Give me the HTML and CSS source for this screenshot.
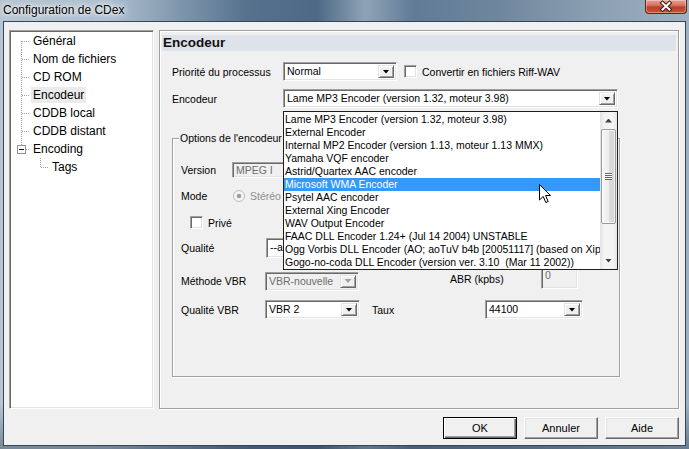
FILE: index.html
```html
<!DOCTYPE html>
<html lang="fr">
<head>
<meta charset="utf-8">
<title>Configuration de CDex</title>
<link rel="stylesheet" href="styles.css">
</head>
<body>
<div class="window">
  <div class="titlebar">
    <span class="title">Configuration de CDex</span>
    <span class="close" aria-label="Fermer">
      <svg width="40" height="13" viewBox="0 0 40 13">
        <path d="M16.5 3 L23.5 9.5 M23.5 3 L16.5 9.5" stroke="#3d1810" stroke-width="4" stroke-linecap="square" fill="none"/>
        <path d="M16.5 3 L23.5 9.5 M23.5 3 L16.5 9.5" stroke="#ffffff" stroke-width="2" stroke-linecap="square" fill="none"/>
      </svg>
    </span>
  </div>
  <div class="client">
    <div class="main">
      <div class="tree">
        <div class="node"><span class="gutter g-first"></span><span class="label">Général</span></div>
        <div class="node"><span class="gutter g-mid"></span><span class="label">Nom de fichiers</span></div>
        <div class="node"><span class="gutter g-mid"></span><span class="label">CD ROM</span></div>
        <div class="node"><span class="gutter g-mid"></span><span class="label selected">Encodeur</span></div>
        <div class="node"><span class="gutter g-mid"></span><span class="label">CDDB local</span></div>
        <div class="node"><span class="gutter g-mid"></span><span class="label">CDDB distant</span></div>
        <div class="node"><span class="gutter g-last"><span class="expander"></span></span><span class="label">Encoding</span></div>
        <div class="node"><span class="gutter"></span><span class="gutter g-last"></span><span class="label">Tags</span></div>
      </div>
      <div class="page">
        <div class="page-header">Encodeur</div>
        <div class="frow row-prio">
          <span class="lbl-main">Priorité du processus</span>
          <div class="combo sunken w-prio"><span class="combo-text">Normal</span><span class="combo-btn"><i class="tri"></i></span></div>
          <span class="check sunken"></span><span class="check-text">Convertir en fichiers Riff-WAV</span>
        </div>
        <div class="frow row-enc">
          <span class="lbl-main">Encodeur</span>
          <div class="combo sunken w-enc">
            <span class="combo-text">Lame MP3 Encoder (version 1.32, moteur 3.98)</span><span class="combo-btn"><i class="tri"></i></span>
            <div class="dropdown">
              <div class="items">
                <div class="item">Lame MP3 Encoder (version 1.32, moteur 3.98)</div>
                <div class="item">External Encoder</div>
                <div class="item">Internal MP2 Encoder (version 1.13, moteur 1.13 MMX)</div>
                <div class="item">Yamaha VQF encoder</div>
                <div class="item">Astrid/Quartex AAC encoder</div>
                <div class="item active">Microsoft WMA Encoder</div>
                <div class="item">Psytel AAC encoder</div>
                <div class="item">External Xing Encoder</div>
                <div class="item">WAV Output Encoder</div>
                <div class="item">FAAC DLL Encoder 1.24+ (Jul 14 2004) UNSTABLE</div>
                <div class="item">Ogg Vorbis DLL Encoder (AO; aoTuV b4b [20051117] (based on Xiph.Org's libVorbis))</div>
                <div class="item">Gogo-no-coda DLL Encoder (version ver. 3.10  (Mar 11 2002))</div>
              </div>
              <div class="sb">
                <div class="sb-btn"><i class="arr up"></i></div>
                <div class="thumb"><i class="grip"></i></div>
                <div class="sb-track"></div>
                <div class="sb-btn"><i class="arr"></i></div>
              </div>
              <svg class="cursor" width="13" height="20" viewBox="0 0 13 20">
                <path d="M0.5 0.5 L0.5 16 L4.2 12.4 L6.8 18.5 L9.2 17.5 L6.6 11.5 L11.5 11.5 Z" fill="#fff" stroke="#000" stroke-width="1" stroke-linejoin="miter"/>
              </svg>
            </div>
          </div>
        </div>
        <div class="group">
          <span class="legend">Options de l'encodeur</span>
          <div class="grow r-version">
            <span class="gl w51">Version</span>
            <div class="edit sunken disabled w-version">MPEG I</div>
          </div>
          <div class="grow r-mode">
            <span class="gl w52">Mode</span>
            <span class="radio"></span><span class="dis-text">Stéréo</span>
          </div>
          <div class="grow r-prive">
            <span class="check sunken"></span><span class="check-text">Privé</span>
          </div>
          <div class="grow r-qual">
            <span class="gl w85">Qualité</span>
            <div class="combo sunken w-qual"><span class="combo-text">--alt-preset standard</span><span class="combo-btn"><i class="tri"></i></span></div>
          </div>
          <div class="grow r-meth">
            <span class="gl w84">Méthode VBR</span>
            <div class="combo sunken disabled w-meth"><span class="combo-text">VBR-nouvelle</span><span class="combo-btn"><i class="tri"></i></span></div>
            <div class="abr">
              <span class="abr-lbl">ABR (kpbs)</span>
              <div class="edit sunken disabled w-abr">0</div>
            </div>
          </div>
          <div class="grow r-qvbr">
            <span class="gl w84">Qualité VBR</span>
            <div class="combo sunken w-vbr"><span class="combo-text">VBR 2</span><span class="combo-btn"><i class="tri"></i></span></div>
            <span class="taux">Taux</span>
            <div class="combo sunken w-taux"><span class="combo-text">44100</span><span class="combo-btn"><i class="tri"></i></span></div>
          </div>
        </div>
      </div>
    </div>
    <div class="buttons">
      <button class="btn default">OK</button>
      <button class="btn">Annuler</button>
      <button class="btn">Aide</button>
    </div>
  </div>
</div>
</body>
</html>
```

FILE: styles.css
```css
* { box-sizing: border-box; }
html, body { margin: 0; padding: 0; }
body {
  width: 689px;
  height: 449px;
  overflow: hidden;
  font-family: "Liberation Sans", Arial, sans-serif;
  font-size: 10.5px;
  color: #000;
  background: #6f8599;
}
.window {
  width: 689px;
  height: 449px;
  display: flex;
  flex-direction: column;
  background:
    linear-gradient(to bottom, rgba(40,60,80,0) 0, rgba(40,60,80,0) 90%, rgba(40,60,80,.45) 100%),
    linear-gradient(to right,
      #b7c5d2 0, #aebfce 16%, #7f97ad 26%, #56718d 36%, #4d6985 46%,
      #8ea3b6 53%, #617b96 60%, #6e869d 72%, #8a9fb2 86%, #a0b1c1 100%);
}
.titlebar {
  height: 21px;
  flex: none;
  display: flex;
  justify-content: space-between;
  align-items: flex-start;
}
.title {
  font-size: 12px;
  line-height: 20px;
  padding-left: 3px;
  color: #000;
  text-shadow: 0 0 6px #fff, 0 0 3px rgba(255,255,255,.9), 0 0 10px rgba(255,255,255,.7);
}
.close {
  width: 42px;
  height: 14px;
  margin-right: 2px;
  display: flex;
  align-items: center;
  justify-content: center;
  border: 1px solid #5e2418;
  border-top: none;
  border-radius: 0 0 4px 4px;
  background: linear-gradient(#e3a093 0, #d57563 40%, #bc3f27 55%, #c9553a 100%);
  box-shadow: inset 0 0 0 1px rgba(255,255,255,.35);
}
.client {
  flex: 1;
  margin: 0 3px 3px 3px;
  border: 1px solid #34475a;
  background: #f0f0f0;
  display: flex;
  flex-direction: column;
  padding: 8px 6px 6px 5px;
}
.main {
  display: flex;
  gap: 5px;
  height: 379px;
}

/* tree */
.tree {
  width: 145px;
  height: 379px;
  flex: none;
  background: #fff;
  border: 1px solid;
  border-color: #a0a0a0 #ffffff #ffffff #a0a0a0;
  box-shadow: inset 1px 1px 0 #696969, inset -1px -1px 0 #e3e3e3;
  padding: 1px 0 0 1px;
  font-size: 12px;
}
.node {
  display: flex;
  align-items: center;
  height: 18px;
}
.gutter {
  width: 19px;
  height: 18px;
  flex: none;
  display: flex;
  align-items: center;
  background-repeat: no-repeat;
}
.g-first, .g-mid, .g-last {
  background-image:
    repeating-linear-gradient(to bottom, #a0a0a0 0 1px, transparent 1px 2px),
    repeating-linear-gradient(to right, #a0a0a0 0 1px, transparent 1px 2px);
  background-position: 10px 0, 11px 9px;
  background-size: 1px 18px, 8px 1px;
}
.g-first { background-position: 10px 9px, 11px 9px; background-size: 1px 9px, 8px 1px; }
.g-last { background-position: 10px 0, 11px 9px; background-size: 1px 9px, 8px 1px; }
.expander {
  width: 9px;
  height: 9px;
  margin-left: 6px;
  border: 1px solid #919191;
  background: #fff;
  display: flex;
  align-items: center;
  justify-content: center;
}
.expander::before {
  content: "";
  width: 5px;
  height: 1px;
  background: #1e1e1e;
}
.label {
  margin-left: 1px;
  padding: 0 2px;
  line-height: 16px;
  white-space: nowrap;
}
.label.selected { background: #ebebeb; }

/* page */
.page {
  width: 520px;
  height: 379px;
  flex: none;
  border: 1px solid #a0a0a0;
  box-shadow: inset 1px 1px 0 #fff, 1px 1px 0 #fff;
  background: #f0f0f0;
  display: flex;
  flex-direction: column;
}
.page-header {
  margin: 4px 2px 0 2px;
  height: 16px;
  line-height: 16px;
  padding-left: 1px;
  background: #dde3e9;
  font-weight: bold;
  font-size: 13.5px;
  color: #111;
}
.frow {
  display: flex;
  align-items: center;
  height: 19px;
  margin-left: 12px;
}
.row-prio { margin-top: 11px; }
.row-enc { margin-top: 8px; }
.lbl-main { width: 111px; flex: none; }

.sunken {
  border: 1px solid;
  border-color: #a0a0a0 #ffffff #ffffff #a0a0a0;
  box-shadow: inset 1px 1px 0 #696969, inset -1px -1px 0 #e3e3e3;
}
.combo {
  display: flex;
  height: 19px;
  flex: none;
  background: #fff;
  padding: 2px;
  position: relative;
}
.combo-text {
  flex: 1;
  line-height: 13px;
  padding-left: 1px;
  overflow: hidden;
  white-space: nowrap;
}
.combo-btn {
  width: 16px;
  flex: none;
  background: #f0f0f0;
  border: 1px solid;
  border-color: #e3e3e3 #696969 #696969 #e3e3e3;
  box-shadow: inset 1px 1px 0 #fff, inset -1px -1px 0 #a0a0a0;
  display: flex;
  align-items: center;
  justify-content: center;
}
.tri {
  display: block;
  width: 7px;
  height: 4px;
  background: #000;
  clip-path: polygon(0 0, 100% 0, 50% 100%);
}
.combo.disabled { background: #f0f0f0; color: #6d6d6d; }
.combo.disabled .tri { background: #a0a0a0; }
.w-prio { width: 114px; }
.w-enc { width: 335px; }
.w-qual { width: 110px; height: 20px; }
.w-meth { width: 94px; }
.w-vbr { width: 95px; }
.w-taux { width: 98px; }

.check {
  width: 13px;
  height: 13px;
  flex: none;
  background: #fff;
}
.row-prio .check { margin-left: 7px; }
.check-text { margin-left: 5px; white-space: nowrap; }

/* dropdown list */
.dropdown {
  position: absolute;
  top: 21px;
  left: -1px;
  width: 335px;
  height: 159px;
  border: 1px solid #1e1e1e;
  background: #fff;
  display: flex;
  z-index: 5;
}
.items {
  width: 316px;
  padding-top: 1px;
  overflow: hidden;
}
.item {
  height: 13px;
  line-height: 13px;
  padding-left: 1px;
  white-space: pre;
  overflow: hidden;
}
.item.active { background: #3399ff; color: #fff; }
.sb {
  width: 17px;
  display: flex;
  flex-direction: column;
  background: linear-gradient(to right, #e3e3e3, #f4f4f4 25%, #f4f4f4 75%, #e6e6e6);
}
.sb-btn {
  height: 17px;
  flex: none;
  display: flex;
  align-items: center;
  justify-content: center;
}
.arr {
  display: block;
  width: 7px;
  height: 4px;
  background: #404040;
  clip-path: polygon(0 0, 100% 0, 50% 100%);
}
.arr.up { clip-path: polygon(50% 0, 100% 100%, 0 100%); }
.thumb {
  height: 95px;
  margin: 0 1px;
  flex: none;
  border: 1px solid #9a9a9a;
  border-radius: 2px;
  background: linear-gradient(to right, #f7f7f7, #ececec 50%, #dedede 51%, #d4d4d4);
  box-shadow: inset 0 0 0 1px rgba(255,255,255,.7);
  display: flex;
  align-items: center;
  justify-content: center;
}
.grip {
  display: block;
  width: 7px;
  height: 7px;
  background: repeating-linear-gradient(to bottom, #676767 0 1px, #fafafa 1px 2px);
}
.sb-track { flex: 1; }
.cursor {
  position: absolute;
  left: 255px;
  top: 72px;
}

/* group box */
.group {
  margin: 30px 0 0 12px;
  width: 448px;
  height: 239px;
  border: 1px solid #a0a0a0;
  box-shadow: inset 1px 1px 0 #fff, 1px 1px 0 #fff;
  display: flex;
  flex-direction: column;
  padding-left: 8px;
}
.legend {
  align-self: flex-start;
  margin: -7px 0 0 -2px;
  padding: 0 1px;
  height: 13px;
  line-height: 13px;
  background: #f0f0f0;
  white-space: nowrap;
}
.grow { display: flex; align-items: center; }
.gl { flex: none; white-space: nowrap; }
.w51 { width: 51px; }
.w52 { width: 52px; }
.w84 { width: 84px; }
.w85 { width: 85px; }
.r-version { margin-top: 16px; height: 17px; }
.r-mode { margin-top: 11px; height: 14px; }
.r-prive { margin-top: 12px; height: 15px; padding-left: 9px; }
.r-qual { margin-top: 8px; height: 20px; }
.r-meth { margin-top: 13px; height: 20px; }
.r-qvbr { margin-top: 9px; height: 19px; }
.edit {
  height: 16px;
  flex: none;
  background: #fff;
  padding: 0 3px;
  line-height: 14px;
}
.edit.disabled { background: #f0f0f0; color: #6d6d6d; }
.w-version { width: 110px; }
.w-abr { width: 37px; height: 21px; line-height: 12px; }
.radio {
  width: 12px;
  height: 12px;
  flex: none;
  border-radius: 50%;
  border: 1px solid #bcbcbc;
  background: radial-gradient(circle, #9d9d9d 0 2px, #f5f5f5 2.6px);
}
.dis-text { margin-left: 5px; color: #8d8d8d; }
.abr {
  display: flex;
  align-items: center;
  align-self: flex-start;
  margin-top: -3px;
  height: 21px;
  margin-left: 91px;
}
.abr-lbl { width: 91px; flex: none; }
.taux { margin-left: 12px; width: 113px; flex: none; }

/* buttons */
.buttons {
  display: flex;
  justify-content: flex-end;
  gap: 7px;
  margin-top: 8px;
}
.btn {
  width: 74px;
  height: 22px;
  margin: 0;
  padding: 0;
  font-family: "Liberation Sans", Arial, sans-serif;
  font-size: 11px;
  color: #000;
  background: #f0f0f0;
  border: 1px solid;
  border-color: #fff #696969 #696969 #fff;
  box-shadow: inset -1px -1px 0 #a0a0a0, inset 1px 1px 0 #e3e3e3;
}
.btn.default {
  border: 1px solid #000;
  box-shadow: inset 1px 1px 0 #fff, inset -1px -1px 0 #696969, inset -2px -2px 0 #a0a0a0;
}
```
